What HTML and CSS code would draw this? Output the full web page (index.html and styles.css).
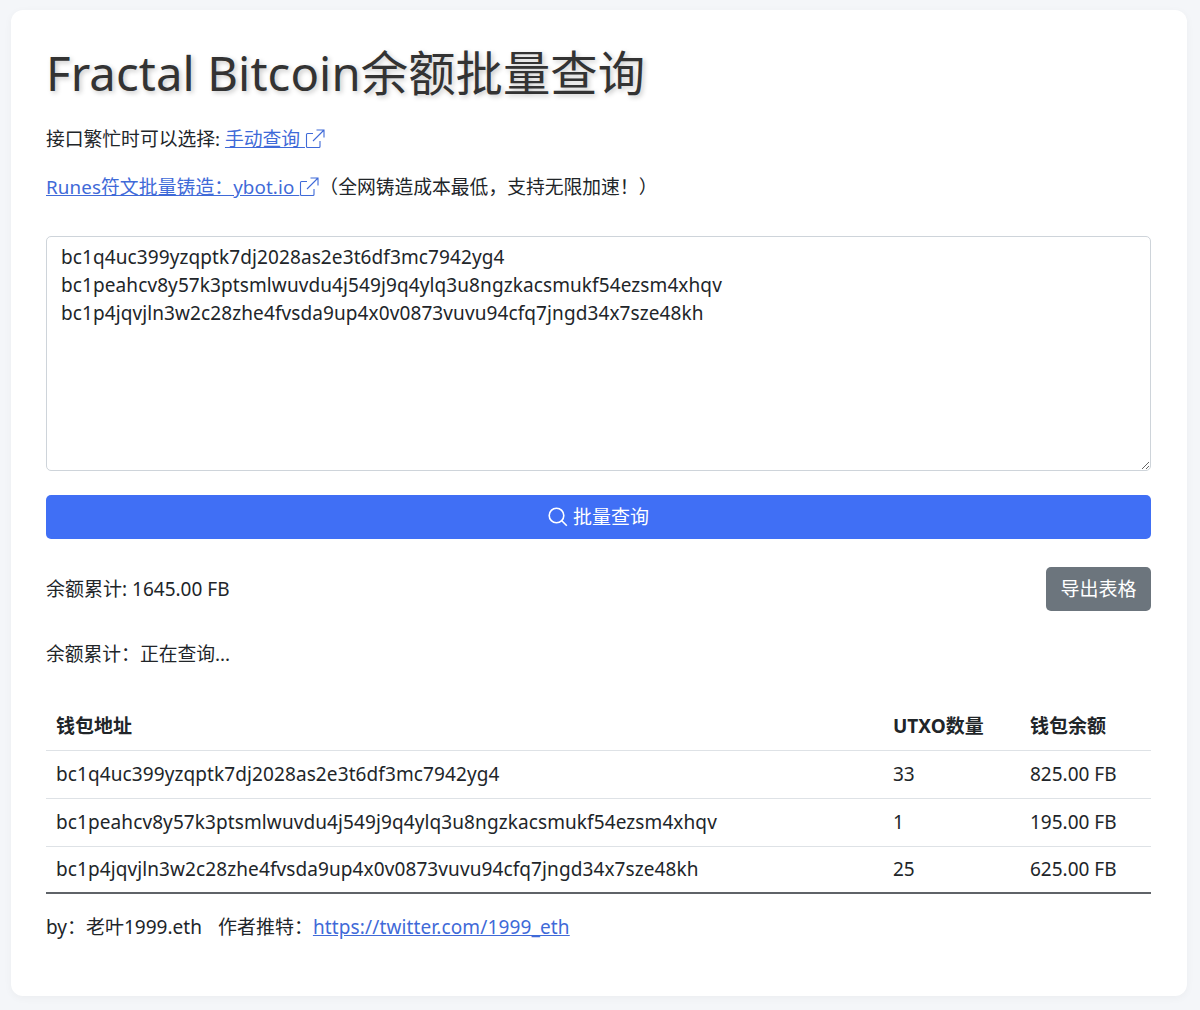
FILE: index.html
```html
<!DOCTYPE html>
<html lang="zh-CN">
<head>
<meta charset="utf-8">
<title>Fractal Bitcoin余额批量查询</title>
<link rel="stylesheet" href="styles.css">
</head>
<body>
<main class="card">
  <h1 class="title">Fractal Bitcoin余额批量查询</h1>
  <p class="line">接口繁忙时可以选择: <a href="#" class="link">手动查询 <svg class="ext" viewBox="0 0 20 20"><path d="M8 4.500H2.500a1 1 0 0 0-1 1v12a1 1 0 0 0 1 1H14a1 1 0 0 0 1-1V12M11.500 1h7.500v7.500M19 1 8 12"/></svg></a></p>
  <p class="line"><a href="#" class="link runes">Runes符文批量铸造：ybot.io <svg class="ext" viewBox="0 0 20 20"><path d="M8 4.500H2.500a1 1 0 0 0-1 1v12a1 1 0 0 0 1 1H14a1 1 0 0 0 1-1V12M11.500 1h7.500v7.500M19 1 8 12"/></svg></a>（全网铸造成本最低，支持无限加速！）</p>
  <textarea class="input" spellcheck="false">bc1q4uc399yzqptk7dj2028as2e3t6df3mc7942yg4
bc1peahcv8y57k3ptsmlwuvdu4j549j9q4ylq3u8ngzkacsmukf54ezsm4xhqv
bc1p4jqvjln3w2c28zhe4fvsda9up4x0v0873vuvu94cfq7jngd34x7sze48kh</textarea>
  <button class="btn primary"><svg class="search" viewBox="0 0 20 20"><circle cx="8.500" cy="8.500" r="7.300"/><path d="m13.800 13.800 5 5"/></svg>批量查询</button>
  <div class="summary">
    <span>余额累计: 1645.00 FB</span>
    <button class="btn secondary">导出表格</button>
  </div>
  <p class="status">余额累计：正在查询...</p>
  <table class="table">
    <thead>
      <tr><th>钱包地址</th><th class="col-utxo">UTXO数量</th><th class="col-bal">钱包余额</th></tr>
    </thead>
    <tbody>
      <tr><td class="addr">bc1q4uc399yzqptk7dj2028as2e3t6df3mc7942yg4</td><td>33</td><td>825.00 FB</td></tr>
      <tr><td class="addr">bc1peahcv8y57k3ptsmlwuvdu4j549j9q4ylq3u8ngzkacsmukf54ezsm4xhqv</td><td>1</td><td>195.00 FB</td></tr>
      <tr class="last"><td class="addr">bc1p4jqvjln3w2c28zhe4fvsda9up4x0v0873vuvu94cfq7jngd34x7sze48kh</td><td>25</td><td>625.00 FB</td></tr>
    </tbody>
  </table>
  <p class="footer">by：老叶1999.eth&nbsp;&nbsp; 作者推特：<a href="#" class="link footer-link">https://twitter.com/1999_eth</a></p>
</main>
</body>
</html>
```
FILE: styles.css
```css
* { box-sizing: border-box; }
html, body { height: 100%; }
body {
  margin: 0;
  padding: 10px 13px 14px 11px;
  background: #f4f6f9;
  color: #212529;
  font-family: "Noto Sans", "Noto Sans CJK SC", sans-serif;
  font-size: 19px;
  line-height: 28px;
}
.card {
  height: 986px;
  padding: 30px 36px 0 35px;
  background: #fff;
  border-radius: 12px;
  box-shadow: 0 2px 8px rgba(0, 0, 0, .04);
}
.title {
  margin: 0 0 19px;
  font-size: 47.300px;
  line-height: 66px;
  font-weight: 400;
  letter-spacing: .1px;
  color: #333;
  text-shadow: 2px 2px 5px rgba(0, 0, 0, .22);
}
.line { margin: 0 0 20px; height: 28px; font-size: 18.8px; }
.link { color: #3f6ad8; text-decoration: underline; }
.runes { letter-spacing: .1px; }
.ext {
  width: 20px; height: 20px;
  vertical-align: -3px;
  fill: none; stroke: currentColor; stroke-width: 1.100;
}
.input {
  display: block;
  width: 100%;
  height: 235px;
  margin-top: 35px;
  padding: 6px 14px;
  border: 1px solid #ced4da;
  border-radius: 5px;
  color: #212529;
  font: inherit;
  letter-spacing: .1px;
  outline: none;
}
.btn {
  border: 0;
  border-radius: 5px;
  color: #fff;
  font: inherit;
  height: 44px;
}
.primary {
  display: flex;
  align-items: center;
  justify-content: center;
  gap: 5px;
  width: 100%;
  margin-top: 24px;
  background: #406ff5;
}
.search {
  width: 20px; height: 20px;
  fill: none; stroke: #fff; stroke-width: 1.600;
}
.secondary {
  padding: 0 14.500px;
  background: #6c757d;
}
.summary {
  display: flex;
  align-items: center;
  justify-content: space-between;
  margin-top: 28px;
}
.status { margin: 29px 0 0; font-size: 18.8px; }
.table {
  width: 100%;
  margin-top: 34px;
  border-collapse: collapse;
  table-layout: fixed;
}
.table th, .table td {
  height: 48px;
  padding: 0 10px;
  text-align: left;
  border-bottom: 1px solid #dee2e6;
  white-space: nowrap;
}
.table .last td { height: 47px; border-bottom: 2px solid #5f6368; }
.table th { font-weight: 700; }
.addr { letter-spacing: .1px; }
.col-utxo { width: 137px; }
.col-bal { width: 131px; }
.footer { margin: 19px 0 0; word-spacing: .4px; }
.footer-link { letter-spacing: .13px; }
```
